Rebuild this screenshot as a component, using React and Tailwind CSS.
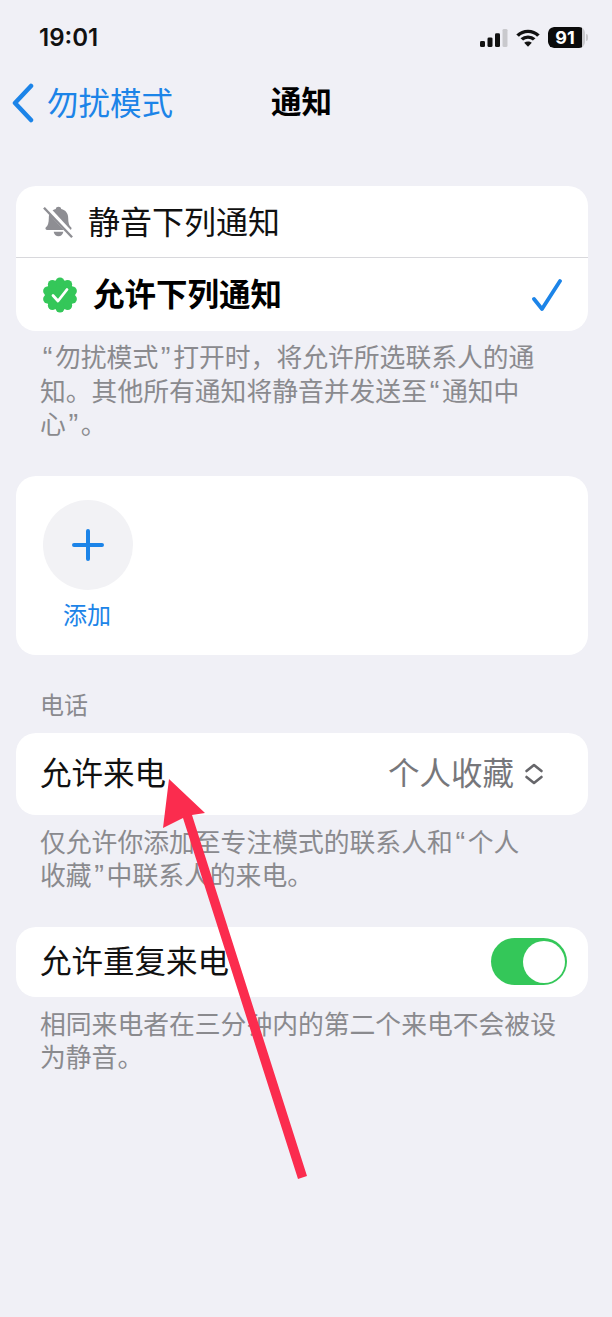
const font = "[font-family:'Noto_Sans_CJK_SC','Noto_Sans',sans-serif]";

function Signal() {
  return (
    <svg width="28" height="18" viewBox="0 0 28 21" preserveAspectRatio="none">
      <rect x="0" y="14" width="5" height="7" rx="1.5" fill="#111" />
      <rect x="7.5" y="10" width="5" height="11" rx="1.5" fill="#111" />
      <rect x="15" y="5" width="5" height="16" rx="1.5" fill="#111" />
      <rect x="22.5" y="0" width="5" height="21" rx="1.5" fill="#c9c9cd" />
    </svg>
  );
}

function Wifi() {
  return (
    <svg width="24" height="18" viewBox="0 0 24 20" fill="none" stroke="#111" strokeWidth="3.6" preserveAspectRatio="none">
      <path d="M1.6 7.4C7.4 1.2 16.6 1.2 22.4 7.4" />
      <path d="M5.8 11.6C9.2 8 14.8 8 18.2 11.6" />
      <path d="M12 19.8 8.2 15.4C10.400 13.400 13.600 13.400 15.800 15.400Z" fill="#111" stroke="none" />
    </svg>
  );
}

function Battery() {
  return (
    <div className="flex items-center gap-[1px]">
      <div className="relative h-[21px] w-[37px] overflow-hidden rounded-[6px] bg-[#c9c9cd]">
        <div className="flex h-full w-[34px] items-center justify-center rounded-l-[6px] bg-[#0b0b0b]">
          <span className="font-['Inter'] text-[18px] leading-none font-bold text-white">91</span>
        </div>
      </div>
      <div className="h-[7px] w-[2px] rounded-r-[2px] bg-[#c9c9cd]" />
    </div>
  );
}

function BellSlash() {
  return (
    <svg width="31" height="34" viewBox="0 0 32 38" preserveAspectRatio="none">
      <path d="M16 2c1.6 0 2.6 1 2.8 2.4 4.6 1.2 7.2 5 7.2 10 0 5.6 1 8.4 3 10.6 1 1.2.4 3-1.4 3H4.4c-1.8 0-2.4-1.8-1.4-3 2-2.2 3-5 3-10.6 0-5 2.6-8.800 7.200-10C13.400 3 14.400 2 16 2z" fill="#8e8e93" />
      <path d="M11 30h10c-.4 3-2.400 5-5 5s-4.600-2-5-5z" fill="#8e8e93" />
      <path d="M3 2 31 35" stroke="#ffffff" strokeWidth="5.500" />
      <path d="M1 3 30 36" stroke="#8e8e93" strokeWidth="2.400" />
    </svg>
  );
}

function Badge() {
  const bumps = [0, 36, 72, 108, 144, 180, 216, 252, 288, 324];
  return (
    <svg width="36" height="36" viewBox="0 0 36 36">
      <circle cx="18" cy="18" r="15" fill="#34c759" />
      {bumps.map((a) => (
        <circle
          key={a}
          cx={18 + 13 * Math.sin((a * Math.PI) / 180)}
          cy={18 - 13 * Math.cos((a * Math.PI) / 180)}
          r="4.500"
          fill="#34c759"
        />
      ))}
      <path d="M11 18.500l5 5.500 9-11.500" fill="none" stroke="#fff" strokeWidth="2.800" strokeLinecap="round" strokeLinejoin="round" />
    </svg>
  );
}

function Open() {
  return <span className="inline-block w-[15px] text-center font-['Liberation_Sans'] text-[29px] leading-none">“</span>;
}

function Close() {
  return <span className="inline-block w-[15px] text-center font-['Liberation_Sans'] text-[29px] leading-none">”</span>;
}

export default function App() {
  return (
    <div className={`relative h-[1317px] w-[612px] overflow-hidden bg-[#f0f0f6] ${font}`}>
      {/* Status bar */}
      <div className="flex h-[75px] items-start justify-between pt-[23px] pr-[24px] pl-[39px]">
        <span className="font-['Inter'] text-[24px] leading-[29px] font-semibold text-[#111]">19:01</span>
        <div className="flex items-center gap-[8px] pt-[4px]">
          <Signal />
          <Wifi />
          <Battery />
        </div>
      </div>

      {/* Nav bar */}
      <div className="relative flex h-[56px] items-center pl-[12px]">
        <svg width="22" height="40" viewBox="0 0 22 40" fill="none" stroke="#1c84e8" strokeWidth="4.500" strokeLinecap="round" strokeLinejoin="round">
          <path d="M19 3 3 20l16 17" />
        </svg>
        <span className="mb-[2px] ml-[13px] text-[31.500px] leading-none text-[#1c84e8]">勿扰模式</span>
        <span className="absolute left-[271px] mb-[5px] text-[30.500px] leading-none font-semibold text-black">通知</span>
      </div>

      {/* Mode card */}
      <div className="mt-[55px] mr-[24px] ml-[16px] rounded-[20px] bg-white">
        <div className="flex h-[71px] items-center pl-[27px]">
          <BellSlash />
          <span className="mb-[3px] ml-[14px] text-[32px] leading-none text-[#111]">静音下列通知</span>
        </div>
        <div className="h-[1px] bg-[#d8d8dc]" />
        <div className="flex h-[73px] items-center justify-between pr-[26px] pl-[26px]">
          <div className="flex items-center">
            <Badge />
            <span className="mb-[3px] ml-[15px] text-[31.500px] leading-none font-semibold text-black">允许下列通知</span>
          </div>
          <svg width="30" height="32" viewBox="0 0 30 32" fill="none" stroke="#1c84e8" strokeWidth="3.800" strokeLinecap="round" strokeLinejoin="round">
            <path d="M2 20l8 10L28 2" />
          </svg>
        </div>
      </div>

      <p className="mt-[8px] ml-[40px] text-[25.800px] leading-[33.500px] text-[#8a8a8e]">
        <Open />勿扰模式<Close />打开时，将允许所选联系人的通<br />
        知。其他所有通知将静音并发送至<Open />通知中<br />
        心<Close />。
      </p>

      {/* Add card */}
      <div className="mt-[36px] mr-[24px] ml-[16px] flex h-[179px] flex-col items-start rounded-[20px] bg-white pt-[24px] pl-[27px]">
        <div className="flex h-[90px] w-[90px] items-center justify-center rounded-full bg-[#f2f2f5]">
          <svg width="32" height="32" viewBox="0 0 32 32" stroke="#1c84e8" strokeWidth="4" strokeLinecap="round">
            <path d="M16 2v28M2 16h28" />
          </svg>
        </div>
        <span className="mt-[9px] ml-[20px] text-[24px] leading-[30px] text-[#1c84e8]">添加</span>
      </div>

      {/* Phone */}
      <p className="mt-[34px] ml-[40px] text-[24px] leading-[30px] text-[#8a8a8e]">电话</p>
      <div className="mt-[14px] mr-[24px] ml-[16px] flex h-[82px] items-center justify-between rounded-[20px] bg-white pr-[44px] pl-[24px]">
        <span className="mb-[3px] text-[31.500px] leading-none text-[#111]">允许来电</span>
        <div className="flex items-center gap-[10px]">
          <span className="mb-[3px] text-[31.500px] leading-none text-[#77777b]">个人收藏</span>
          <svg width="20" height="22" viewBox="0 0 20 22" fill="none" stroke="#66666a" strokeWidth="2.600" strokeLinecap="round" strokeLinejoin="round">
            <path d="M2.500 8 10 2l7.500 6M2.500 14l7.500 6 7.500-6" />
          </svg>
        </div>
      </div>
      <p className="mt-[9px] ml-[40px] text-[25.800px] leading-[33.500px] text-[#8a8a8e]">
        仅允许你添加至专注模式的联系人和<Open />个人<br />
        收藏<Close />中联系人的来电。
      </p>

      {/* Repeated */}
      <div className="mt-[36px] mr-[24px] ml-[16px] flex h-[70px] items-center justify-between rounded-[20px] bg-white pr-[21px] pl-[24px]">
        <span className="mb-[3px] text-[31.500px] leading-none text-[#111]">允许重复来电</span>
        <div className="flex h-[47px] w-[76px] items-center justify-end rounded-full bg-[#34c759] pr-[2px]">
          <div className="h-[42px] w-[42px] rounded-full bg-white" />
        </div>
      </div>
      <p className="mt-[9px] ml-[40px] text-[25.800px] leading-[33.500px] text-[#8a8a8e]">
        相同来电者在三分钟内的第二个来电不会被设<br />
        为静音。
      </p>

      {/* Annotation arrow */}
      <svg className="absolute top-0 left-0" width="612" height="1317" viewBox="0 0 612 1317">
        <path d="M169 779 205 813 192 815 307 1176 298 1179 183 818 163 828Z" fill="#fb2c4e" />
      </svg>
    </div>
  );
}
